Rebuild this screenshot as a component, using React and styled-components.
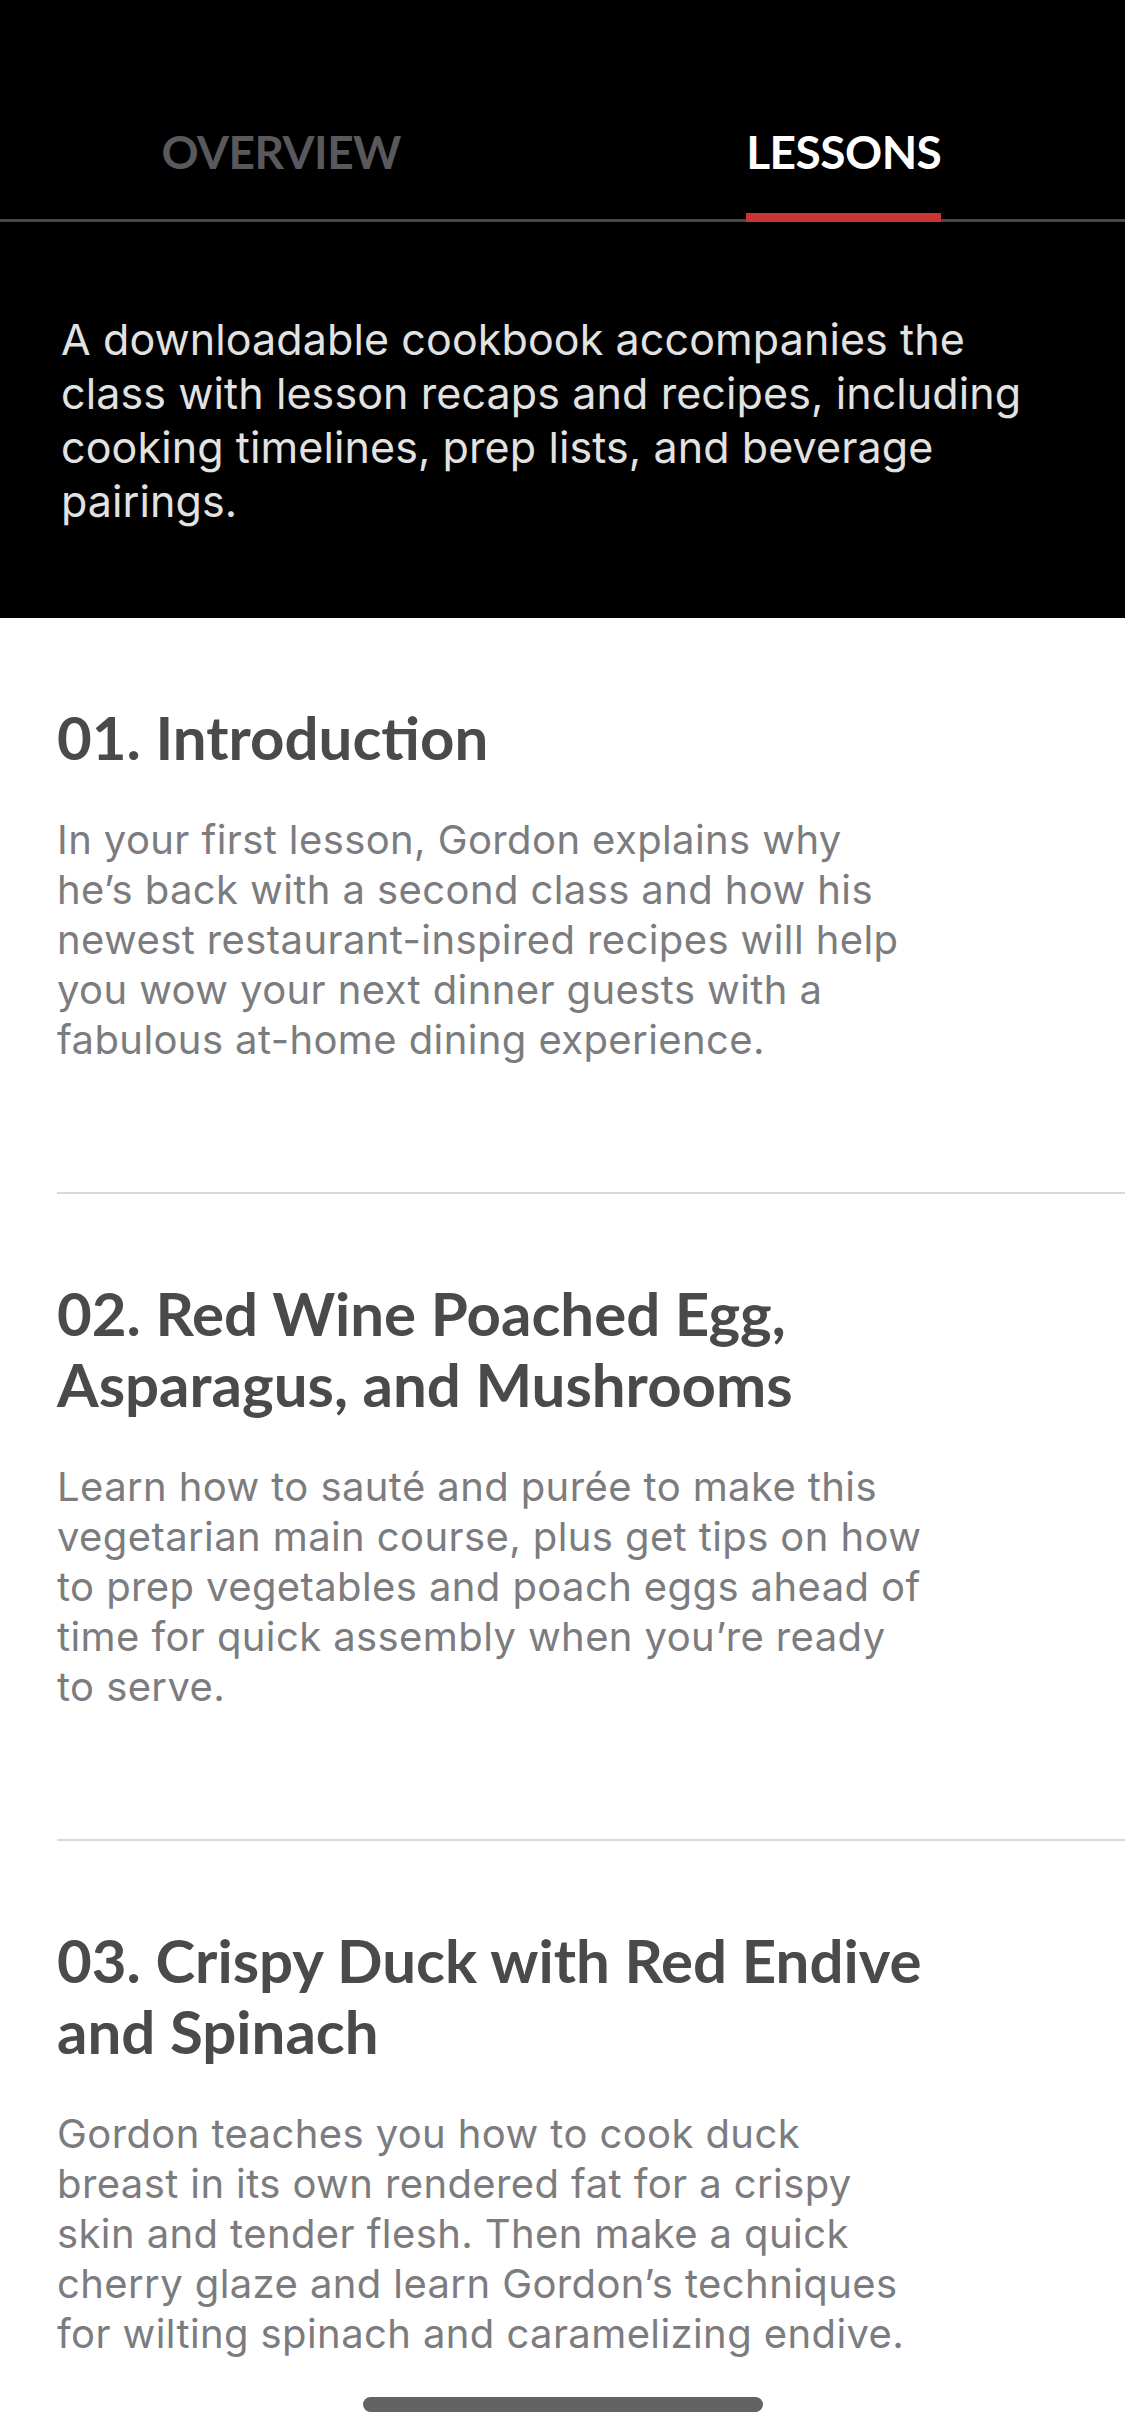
import styled, { createGlobalStyle } from "styled-components"

const GlobalStyle = createGlobalStyle`
    html, body {
        margin: 0;
        padding: 0;
        background: #ffffff;
        overflow: hidden;
    }
    * {
        box-sizing: border-box;
    }
`

const Screen = styled.div`
    width: 1125px;
    min-height: 2436px;
    background: #ffffff;
    display: flex;
    flex-direction: column;
`

const Header = styled.header`
    background: #000000;
    display: flex;
    flex-direction: column;
`

const TabBar = styled.nav`
    display: grid;
    grid-template-columns: 1fr 1fr;
    padding-top: 124px;
    box-shadow: inset 0 -3px 0 #48484a;
`

const Tab = styled.div`
    display: flex;
    justify-content: center;
`

const TabInner = styled.div`
    display: inline-flex;
    flex-direction: column;
    align-items: stretch;
`

const TabLabel = styled.span`
    font-family: "Lato", "Liberation Sans", sans-serif;
    font-weight: 700;
    font-size: 46px;
    line-height: 56px;
    letter-spacing: -0.5px;
    color: ${props => (props.$active ? "#ffffff" : "#59595d")};
`

const Indicator = styled.div`
    height: 9px;
    margin-top: 33px;
    background: ${props => (props.$active ? "#cc3333" : "transparent")};
`

const Intro = styled.p`
    margin: 0;
    padding: 90px 61px 90px;
    font-family: "Inter", "Liberation Sans", sans-serif;
    font-size: 43px;
    line-height: 54px;
    letter-spacing: 0.1px;
    color: #e2e2e2;
`

const LessonList = styled.ul`
    list-style: none;
    margin: 0;
    padding: 0;
`

const Lesson = styled.li`
    margin-left: 57px;
    padding: 84px 200px 127px 0;
    border-bottom: 2px solid #dadada;
    display: flex;
    flex-direction: column;
    gap: 42px;
`

const LessonTitle = styled.h2`
    margin: 0;
    font-family: "Lato", "Liberation Sans", sans-serif;
    font-weight: 700;
    font-size: 60px;
    line-height: 71px;
    color: #4a4a4d;
`

const LessonText = styled.p`
    margin: 0;
    font-family: "Inter", "Liberation Sans", sans-serif;
    font-size: 40px;
    line-height: 50px;
    letter-spacing: 0.4px;
    color: #7c7c7f;
`

const HomeIndicator = styled.div`
    position: fixed;
    left: 50%;
    bottom: 24px;
    width: 400px;
    height: 15px;
    margin-left: -200px;
    border-radius: 8px;
    background: #636363;
`

const tabs = [
    { label: "OVERVIEW", active: false },
    { label: "LESSONS", active: true },
]

const lessons = [
    {
        title: "01. Introduction",
        text: "In your first lesson, Gordon explains why he’s back with a second class and how his newest restaurant-inspired recipes will help you wow your next dinner guests with a fabulous at-home dining experience.",
    },
    {
        title: "02. Red Wine Poached Egg, Asparagus, and Mushrooms",
        text: "Learn how to sauté and purée to make this vegetarian main course, plus get tips on how to prep vegetables and poach eggs ahead of time for quick assembly when you’re ready to serve.",
    },
    {
        title: "03. Crispy Duck with Red Endive and Spinach",
        text: "Gordon teaches you how to cook duck breast in its own rendered fat for a crispy skin and tender flesh. Then make a quick cherry glaze and learn Gordon’s techniques for wilting spinach and caramelizing endive.",
    },
]

const App = () => {
    return (
        <Screen>
            <GlobalStyle />
            <Header>
                <TabBar>
                    {tabs.map(tab => (
                        <Tab key={tab.label}>
                            <TabInner>
                                <TabLabel $active={tab.active}>{tab.label}</TabLabel>
                                <Indicator $active={tab.active} />
                            </TabInner>
                        </Tab>
                    ))}
                </TabBar>
                <Intro>
                    A downloadable cookbook accompanies the class with lesson recaps and recipes, including cooking timelines, prep lists, and beverage pairings.
                </Intro>
            </Header>
            <LessonList>
                {lessons.map(lesson => (
                    <Lesson key={lesson.title}>
                        <LessonTitle>{lesson.title}</LessonTitle>
                        <LessonText>{lesson.text}</LessonText>
                    </Lesson>
                ))}
            </LessonList>
            <HomeIndicator />
        </Screen>
    )
}

export default App
